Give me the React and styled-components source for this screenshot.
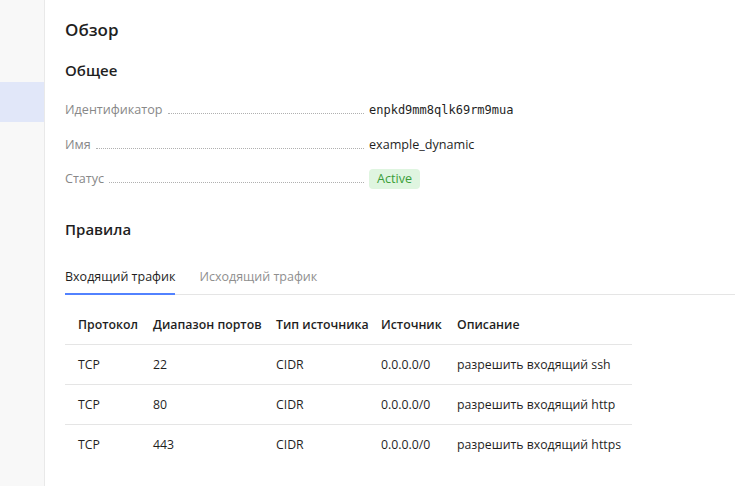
import React from "react";
import styled, { createGlobalStyle } from "styled-components";

const GlobalStyle = createGlobalStyle`
  html, body { margin: 0; padding: 0; background: #fff; }
  body { font-family: "Open Sans", "Noto Sans", sans-serif; color: #1f1f1f; }
`;

const Page = styled.div`
  display: flex;
  width: 735px;
  height: 486px;
  overflow: hidden;
`;

const Sidebar = styled.aside`
  width: 45px;
  flex: none;
  background: #f8f8f8;
  border-right: 1px solid #e9e9e9;
  padding-top: 82px;
  box-sizing: border-box;
`;

const NavItem = styled.div`
  height: 40px;
  background: ${({ active }) => (active ? "#e1e7f9" : "transparent")};
`;

const Main = styled.main`
  flex: 1;
  padding: 18px 0 0 20px;
`;

const Title = styled.h1`
  margin: 0;
  font-size: 17px;
  font-weight: 600;
  line-height: 24px;
`;

const SectionTitle = styled.h2`
  margin: ${({ top }) => top}px 0 0;
  font-size: 15px;
  font-weight: 600;
  line-height: 22px;
`;

const Props = styled.div`
  display: flex;
  flex-direction: column;
  gap: 11.5px;
  margin-top: 17px;
`;

const PropRow = styled.div`
  display: flex;
  align-items: center;
  height: 23px;
`;

const PropLabel = styled.div`
  width: 304px;
  display: flex;
  align-items: baseline;
  font-size: 12.6px;
  color: #888;
  &::after {
    content: "";
    flex: 1;
    margin: 0 5px 0 5px;
    border-bottom: 1px dotted #b0b0b0;
  }
`;

const PropValue = styled.div`
  color: #1f1f1f;
  font-family: ${({ mono }) => (mono ? '"DejaVu Sans Mono", monospace' : "inherit")};
  font-size: ${({ mono }) => (mono ? "12px" : "12.6px")};
`;

const Badge = styled.span`
  display: inline-block;
  padding: 0 8px;
  height: 20px;
  line-height: 20px;
  border-radius: 4px;
  background: #dff5e0;
  color: #3a9e3a;
  font-size: 12.6px;
`;

const Tabs = styled.div`
  display: flex;
  gap: 24px;
  margin-top: 28px;
  border-bottom: 1px solid #e5e5e5;
`;

const Tab = styled.div`
  font-size: 12.5px;
  padding-bottom: 8px;
  color: ${({ active }) => (active ? "#1f1f1f" : "#8f8f8f")};
  border-bottom: 2px solid ${({ active }) => (active ? "#5282ff" : "transparent")};
  margin-bottom: -1px;
`;

const Table = styled.table`
  margin-top: 10px;
  border-collapse: collapse;
  table-layout: fixed;
  width: 567px;
  font-size: 12.3px;
`;

const Th = styled.th`
  text-align: left;
  font-weight: 600;
  height: 39px;
  padding: 0 0 0 13px;
  white-space: nowrap;
`;

const Td = styled.td`
  height: 39px;
  padding: 0 0 0 13px;
  white-space: nowrap;
`;

const Tr = styled.tr`
  border-bottom: ${({ last }) => (last ? "none" : "1px solid #e5e5e5")};
`;

const rules = [
  ["TCP", "22", "CIDR", "0.0.0.0/0", "разрешить входящий ssh"],
  ["TCP", "80", "CIDR", "0.0.0.0/0", "разрешить входящий http"],
  ["TCP", "443", "CIDR", "0.0.0.0/0", "разрешить входящий https"],
];

const widths = [75, 123, 105, 76, 188];

export default function App() {
  return (
    <>
      <GlobalStyle />
      <Page>
        <Sidebar>
          <NavItem active />
        </Sidebar>
        <Main>
          <Title>Обзор</Title>
          <SectionTitle top={17}>Общее</SectionTitle>
          <Props>
            <PropRow>
              <PropLabel>Идентификатор</PropLabel>
              <PropValue mono>enpkd9mm8qlk69rm9mua</PropValue>
            </PropRow>
            <PropRow>
              <PropLabel>Имя</PropLabel>
              <PropValue>example_dynamic</PropValue>
            </PropRow>
            <PropRow>
              <PropLabel>Статус</PropLabel>
              <PropValue><Badge>Active</Badge></PropValue>
            </PropRow>
          </Props>
          <SectionTitle top={28}>Правила</SectionTitle>
          <Tabs>
            <Tab active>Входящий трафик</Tab>
            <Tab>Исходящий трафик</Tab>
          </Tabs>
          <Table>
            <colgroup>
              {widths.map((w, i) => <col key={i} style={{ width: w }} />)}
            </colgroup>
            <thead>
              <Tr>
                <Th>Протокол</Th>
                <Th>Диапазон портов</Th>
                <Th>Тип источника</Th>
                <Th>Источник</Th>
                <Th>Описание</Th>
              </Tr>
            </thead>
            <tbody>
              {rules.map((r, i) => (
                <Tr key={i} last={i === rules.length - 1}>
                  {r.map((c, j) => <Td key={j}>{c}</Td>)}
                </Tr>
              ))}
            </tbody>
          </Table>
        </Main>
      </Page>
    </>
  );
}
